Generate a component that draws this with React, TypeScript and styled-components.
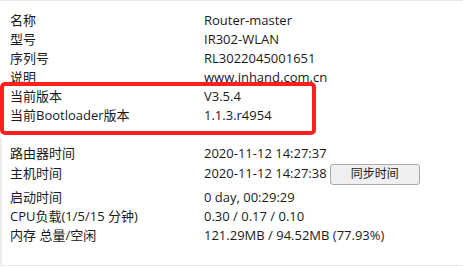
import React from "react";
import styled, { createGlobalStyle } from "styled-components";

const Global = createGlobalStyle`
  html, body { margin: 0; padding: 0; background: #fff; }
  body {
    font-family: "Open Sans", "Noto Sans CJK SC", sans-serif;
    font-size: 13px;
    color: #1a1a1a;
    width: 463px;
    height: 267px;
    overflow: hidden;
  }
`;

const Page = styled.div`
  position: relative;
  width: 463px;
  height: 267px;
  border-top: 1px solid #e6e6e6;
  box-sizing: border-box;
`;

const InfoGroup = styled.div`
  display: grid;
  grid-template-columns: 194px 1fr;
  padding: 9.5px 0 0 10px;
`;

const StatusGroup = styled.div`
  display: grid;
  grid-template-columns: 194px 1fr;
  margin-top: 13px;
  padding: 6px 0 20.5px 8px;
  border-left: 2px solid #ececec;
  border-bottom: 1px dotted #d8d8d8;
`;

const Cell = styled.div<{ $tall?: boolean }>`
  height: ${(p) => (p.$tall ? 25 : 19)}px;
  padding-top: ${(p) => (p.$tall ? 1.5 : 0)}px;
  box-sizing: border-box;
  line-height: 19px;
  white-space: nowrap;
  display: flex;
  align-items: flex-start;
`;

const SyncButton = styled.button`
  flex: none;
  margin: -0.5px 0 0 3px;
  width: 90px;
  height: 21px;
  padding: 0;
  background: #efefef;
  border: 1px solid #a9a9a9;
  border-radius: 3px;
  font-family: "Open Sans", "Noto Sans CJK SC", sans-serif;
  font-size: 12px;
  color: #1a1a1a;
  line-height: 18px;
`;

const Highlight = styled.div`
  position: absolute;
  left: 0;
  top: 81px;
  width: 316px;
  height: 53px;
  border: 4px solid #ff1f1f;
  border-radius: 5px;
  box-sizing: border-box;
  pointer-events: none;
`;

const info: [string, string][] = [
  ["名称", "Router-master"],
  ["型号", "IR302-WLAN"],
  ["序列号", "RL3022045001651"],
  ["说明", "www.inhand.com.cn"],
  ["当前版本", "V3.5.4"],
  ["当前Bootloader版本", "1.1.3.r4954"],
];

const status: [string, string, boolean?][] = [
  ["路由器时间", "2020-11-12 14:27:37"],
  ["主机时间", "2020-11-12 14:27:38", true],
  ["启动时间", "0 day, 00:29:29"],
  ["CPU负载(1/5/15 分钟)", "0.30 / 0.17 / 0.10"],
  ["内存 总量/空闲", "121.29MB / 94.52MB (77.93%)"],
];

export default function App() {
  return (
    <>
      <Global />
      <Page>
        <InfoGroup>
          {info.map(([k, v]) => (
            <React.Fragment key={k}>
              <Cell>{k}</Cell>
              <Cell>{v}</Cell>
            </React.Fragment>
          ))}
        </InfoGroup>
        <StatusGroup>
          {status.map(([k, v, btn]) => (
            <React.Fragment key={k}>
              <Cell $tall={btn}>{k}</Cell>
              <Cell $tall={btn}>
                {v}
                {btn && <SyncButton>同步时间</SyncButton>}
              </Cell>
            </React.Fragment>
          ))}
        </StatusGroup>
        <Highlight />
      </Page>
    </>
  );
}
